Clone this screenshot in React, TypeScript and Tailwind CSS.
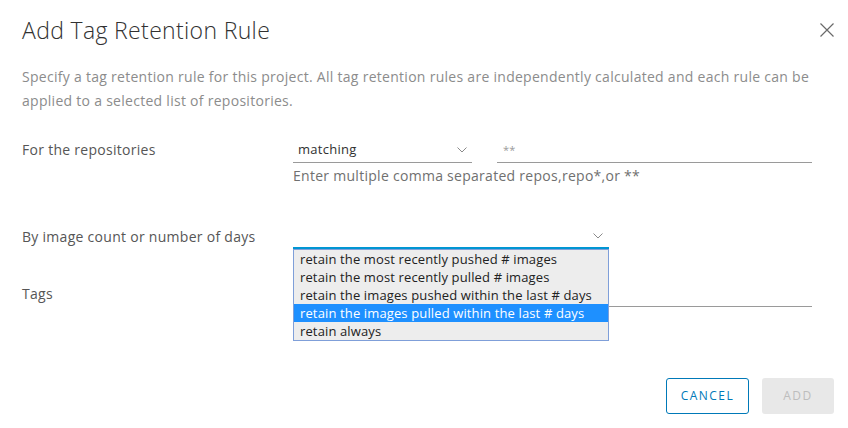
import React from 'react';

function Chevron() {
  return (
    <svg width="10" height="6" viewBox="0 0 10 6" className="shrink-0">
      <path d="M0.5 0.5 L5 5 L9.5 0.5" fill="none" stroke="#8a8a8a" strokeWidth="1" />
    </svg>
  );
}

const options = [
  'retain the most recently pushed # images',
  'retain the most recently pulled # images',
  'retain the images pushed within the last # days',
  'retain the images pulled within the last # days',
  'retain always',
];

export default function App() {
  return (
    <div className="relative h-[428px] w-[848px] overflow-hidden bg-white font-['Open_Sans',sans-serif] text-[14px] tracking-[0.02em] text-[#565656]">
      {/* header */}
      <div className="flex items-start justify-between pl-[22px] pr-[14px] pt-[14px]">
        <h1 className="text-[23px] font-light leading-[32px] tracking-[0.015em] text-[#313131]">Add Tag Retention Rule</h1>
        <button className="mt-[9px] p-0" aria-label="close">
          <svg width="14" height="14" viewBox="0 0 14 14">
            <path d="M0.5 0.5 L13.5 13.5 M13.5 0.5 L0.5 13.5" stroke="#6a6a6a" strokeWidth="1.2" />
          </svg>
        </button>
      </div>

      <p className="mt-[19px] pl-[22px] pr-[30px] leading-[24px] text-[#8c8c8c]">
        Specify a tag retention rule for this project. All tag retention rules are independently calculated and each rule can be applied to a selected list of repositories.
      </p>

      {/* form */}
      <div className="mt-[25px] pl-[22px]">
        <div className="grid grid-cols-[271px_1fr]">
          <label className="leading-[24px]">For the repositories</label>
          <div>
            <div className="flex gap-[25px]">
              <div className="flex h-[25px] w-[179px] items-center justify-between border-b border-[#9a9a9a] pl-[5px] pr-[5px] text-[13px] text-[#313131]">
                <span>matching</span>
                <Chevron />
              </div>
              <div className="flex h-[25px] w-[315px] items-center border-b border-[#9a9a9a] pl-[6px] text-[11px] text-[#9a9a9a]">
                **
              </div>
            </div>
            <div className="mt-[4px] leading-[18px] text-[#707070]">
              Enter multiple comma separated repos,repo*,or **
            </div>
          </div>
        </div>

        <div className="mt-[40px] grid grid-cols-[271px_1fr]">
          <label className="leading-[24px]">By image count or number of days</label>
          <div className="relative">
            <div className="flex h-[24px] w-[316px] items-center justify-end border-b-2 border-[#0095d3] pr-[6px]">
              <Chevron />
            </div>
            <ul className="absolute left-0 top-[24px] z-10 w-[316px] border border-[#7f9fd9] bg-[#ededed] text-[13px] tracking-[0.01em] text-[#222]">
              {options.map((o, i) => (
                <li
                  key={o}
                  className={
                    i === 3
                      ? 'h-[18px] bg-[#1e90ff] pl-[6px] leading-[18px] text-white'
                      : 'h-[18px] pl-[6px] leading-[18px]'
                  }
                >
                  {o}
                </li>
              ))}
            </ul>
          </div>
        </div>

        <div className="mt-[33px] grid grid-cols-[271px_1fr]">
          <label className="leading-[24px]">Tags</label>
          <div className="h-[25px] w-[519px] border-b border-[#9a9a9a]" />
        </div>
      </div>

      {/* footer */}
      <div className="mt-[71px] flex justify-end gap-[13px] pr-[14px]">
        <button className="h-[36px] w-[83px] rounded-[3px] border border-[#0079b8] text-[12px] tracking-[0.12em] text-[#0079b8]">
          CANCEL
        </button>
        <button className="h-[36px] w-[72px] rounded-[3px] bg-[#e8e8e8] text-[12px] tracking-[0.12em] text-[#bdbdbd]">
          ADD
        </button>
      </div>
    </div>
  );
}
